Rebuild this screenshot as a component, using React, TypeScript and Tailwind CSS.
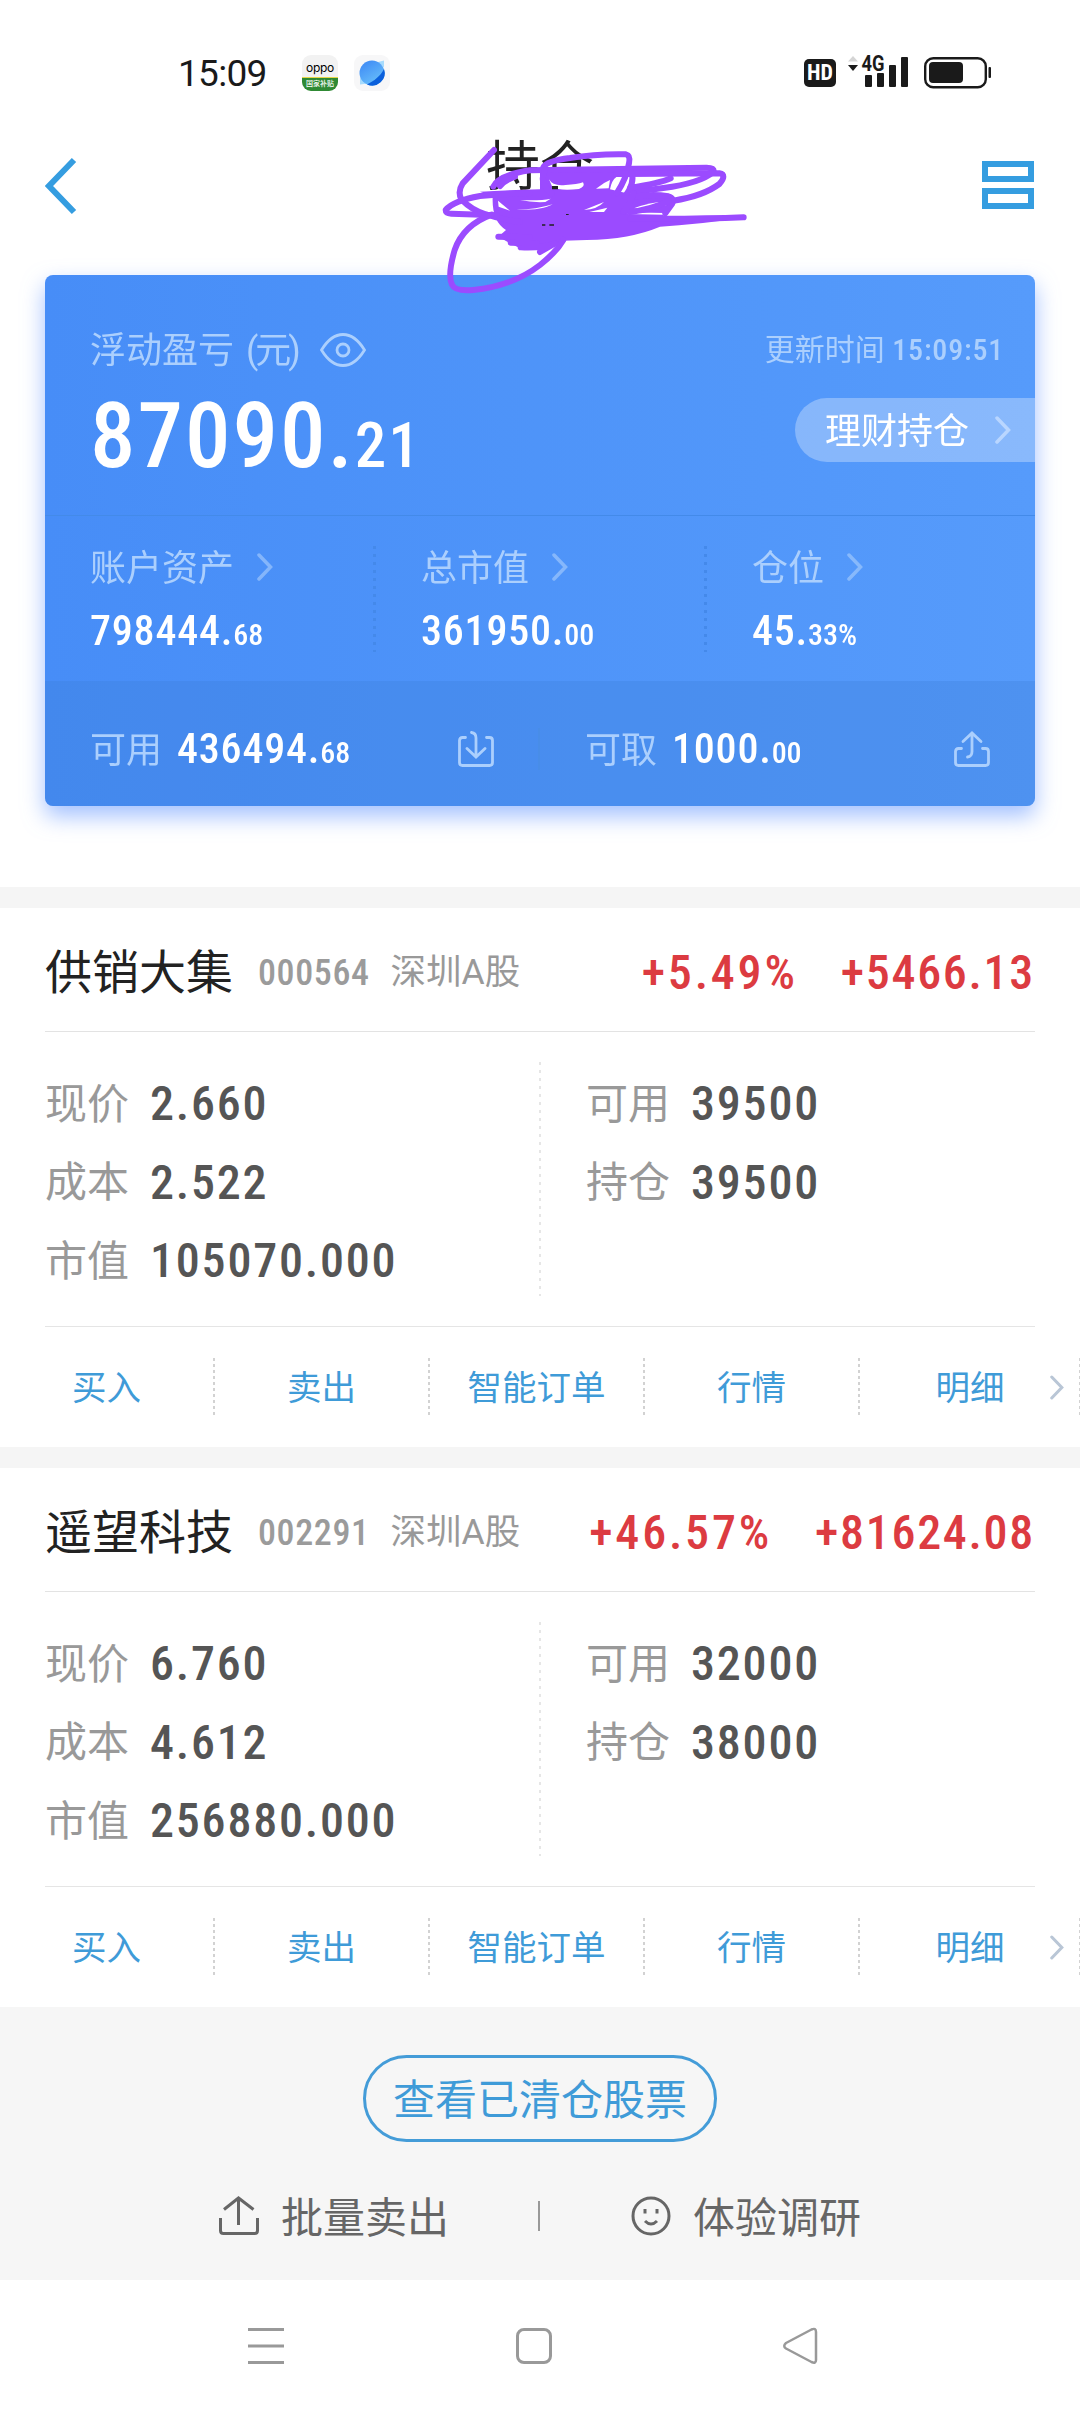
import React from "react";
import { clsx } from "clsx";

type Stock = {
  name: string;
  code: string;
  market: string;
  percent: string;
  profit: string;
  price: string;
  cost: string;
  marketValue: string;
  available: string;
  position: string;
};

type AmountProps = {
  value: string;
  className?: string;
};

const stocks: Stock[] = [
  {
    name: "供销大集",
    code: "000564",
    market: "深圳A股",
    percent: "+5.49%",
    profit: "+5466.13",
    price: "2.660",
    cost: "2.522",
    marketValue: "105070.000",
    available: "39500",
    position: "39500",
  },
  {
    name: "遥望科技",
    code: "002291",
    market: "深圳A股",
    percent: "+46.57%",
    profit: "+81624.08",
    price: "6.760",
    cost: "4.612",
    marketValue: "256880.000",
    available: "32000",
    position: "38000",
  },
];

const summary = [
  { label: "账户资产", value: "798444.68" },
  { label: "总市值", value: "361950.00" },
  { label: "仓位", value: "45.33%" },
];

const actions = ["买入", "卖出", "智能订单", "行情", "明细"];

const Chevron: React.FC<{ className?: string }> = ({ className }) => (
  <svg viewBox="0 0 16 28" fill="none" stroke="currentColor" strokeWidth="3.5" className={className}>
    <path d="M2 2l11.5 12L2 26" strokeLinecap="round" />
  </svg>
);

const StatusBar = () => (
  <div className="flex h-[130px] items-start pt-[55px] text-[#1a1a1a]">
    <span className="ml-[178px] w-[91px] text-[37px] leading-[38px] tracking-[-0.7px]">15:09</span>
    <div className="ml-[33px] flex h-9 w-9 flex-col overflow-hidden rounded-[9px] bg-[#f2f2f2]">
      <span className="h-[22px] pt-1 text-center font-['Inter'] text-[12px] leading-[18px] tracking-[-0.3px] text-black">
        oppo
      </span>
      <span className="h-[14px] border-t border-[#e6d84a] bg-[#2f8a34] text-center text-[7px] leading-[13px] font-medium text-white">
        国家补贴
      </span>
    </div>
    <svg viewBox="0 0 36 36" className="ml-4 h-9 w-9">
      <defs>
        <linearGradient id="globe" x1="0.2" y1="0" x2="0.8" y2="1">
          <stop offset="0" stopColor="#3f8bf5" />
          <stop offset="1" stopColor="#6cc4fb" />
        </linearGradient>
      </defs>
      <rect width="36" height="36" rx="9" fill="#f7f7f8" />
      <path d="M24 7l6-1.5v7zM6 23v6.500l8-1z" fill="#a6dbfd" />
      <circle cx="18" cy="18" r="12.500" fill="url(#globe)" />
      <path d="M30 14a12.500 12.500 0 0 1-17 15.500C20 26 26.500 21 30 14z" fill="#0b60dc" />
    </svg>
    <div className="mt-1 ml-[414px] flex h-7 w-8 items-center justify-center rounded-[5px] bg-[#1a1a1a] text-[22px] leading-7 font-bold text-white [font-stretch:80%]">
      HD
    </div>
    <svg viewBox="0 0 62 36" className="ml-3 h-9 w-[62px] overflow-visible" fill="#1a1a1a">
      <path d="M0 6.500L5 1l5 5.500z" fill="#d5d5d5" />
      <path d="M0 10l5 6 5-6z" />
      <text x="13.500" y="16" fontSize="22" fontWeight="700" textLength="23" lengthAdjust="spacingAndGlyphs">
        4G
      </text>
      <rect x="17" y="20" width="7" height="12" rx="1" />
      <rect x="29" y="18" width="7" height="14" rx="1" />
      <rect x="41" y="10" width="7" height="22" rx="1" />
      <rect x="53" y="2" width="7" height="30" rx="1" />
    </svg>
    <svg viewBox="0 0 68 36" className="ml-[14px] h-9 w-[68px]" fill="#1a1a1a">
      <rect x="1.200" y="3.200" width="60.600" height="29" rx="8" fill="none" stroke="#1a1a1a" strokeWidth="2.400" />
      <rect x="5" y="7" width="34" height="21" rx="4" />
      <rect x="64.500" y="12" width="2.500" height="11" rx="1" />
    </svg>
  </div>
);

// Pen marks that cover the account line below the title
const Scribble = () => (
  <svg viewBox="0 0 990 510" className="pointer-events-none absolute top-0 left-[430px] z-10 h-[170px] w-[330px]">
    <path
      fill="#9b4bff"
      d="M150 185Q230 180 330 178L330 118Q480 104 600 118L720 138L560 140Q545 150 540 178L600 192L720 198L720 232L700 258L945 262Q800 285 690 290Q600 328 470 330L400 332L350 362L270 355L240 340L205 320L228 300Q185 275 188 200Z"
    />
    <g fill="white">
      <path d="M357 148q12 22 50 17 35-2 52-8 8 12-12 20-60 6-80-6z" />
      <path d="M342 150q4 20 20 30l-18-2z" />
      <path d="M540 150q-20 8-42 26l38-1z" />
      <path d="M204 212l36 30-34-12z" />
      <path d="M270 210q60 3 92-4l-16 10q-40 2-76-6z" />
      <path d="M260 240q60-2 108-17-30 18-108 17z" />
      <path d="M478 246l54-13-10 13z" />
      <path d="M462 240l60-24q-20 22-60 24z" />
      <path d="M612 235q50-20 92-20l6 10q-50 12-98 10z" />
      <path d="M590 252q50-6 112-3l-2 5z" />
    </g>
    <g fill="#222">
      <path d="M366 168h18v10h-18zM336 283h10v4h-10zM358 283h14v4h-14zM408 252h8v3h-8z" />
    </g>
    <g fill="none" stroke="#9b4bff" strokeWidth="18" strokeLinecap="round" strokeLinejoin="round">
      <path d="M192 60L98 160Q82 185 94 208Q125 240 165 252Q210 268 270 276" />
      <path d="M300 190Q240 190 150 198Q70 212 47 240Q47 250 64 251L200 256" />
      <path d="M185 254Q100 285 74 360Q52 435 66 464Q75 485 130 480Q250 467 330 405Q380 365 400 330" />
      <path d="M340 112Q350 92 420 84Q500 71 588 73Q602 76 597 100Q590 145 560 190" />
      <path d="M190 170Q205 135 300 121L830 113Q855 113 850 126Q810 160 700 174L610 186" />
      <path d="M560 132L868 130Q892 134 868 162Q820 198 730 212" />
      <path d="M605 128Q615 160 585 200M600 174Q690 160 722 145" />
      <path d="M210 168Q225 150 255 140M345 120Q325 160 365 190" />
      <path d="M600 203Q660 190 715 199Q735 205 726 222L706 250" />
      <path d="M600 246Q660 240 715 214M610 188Q606 215 580 245" />
      <path d="M600 266Q800 268 941 262" />
      <path d="M205 320L300 322M242 338L320 340M272 352Q340 355 375 340L330 366" />
    </g>
  </svg>
);

const Header = () => (
  <header className="relative flex h-[145px] justify-between pr-[46px] pl-[45px]">
    <svg viewBox="0 0 32 58" className="mt-[27px] h-[58px] w-8" fill="none" stroke="#359de0" strokeWidth="6">
      <path d="M29 3L4 29l25 26" />
    </svg>
    <h1 className="mt-[5px] ml-[21px] text-[54px] leading-[66px] text-[#222]">持仓</h1>
    <svg viewBox="0 0 52 48" className="mt-[31px] h-12 w-[52px]" fill="none" stroke="#359de0" strokeWidth="6">
      <rect x="3" y="3" width="46" height="15" />
      <rect x="3" y="30" width="46" height="15" />
    </svg>
    <Scribble />
  </header>
);

const Amount: React.FC<AmountProps> = ({ value, className }) => {
  const [integer, decimal] = value.split(".");

  return (
    <span
      className={clsx("text-[42px] leading-[42px] font-medium tracking-[0.8px] text-white [font-stretch:87%]", className)}
    >
      {integer}.<span className="text-[30px] tracking-[-0.100px]">{decimal}</span>
    </span>
  );
};

const AccountCard = () => (
  <section className="mx-[45px] h-[531px] overflow-hidden rounded-lg bg-linear-to-r from-[#478df7] to-[#569bfb] text-[#abcffd]">
    <div className="flex h-[240px] justify-between pl-[45px]">
      <div className="pt-[55px]">
        <div className="flex h-[42px] items-center text-[36px]">
          <span>浮动盈亏</span>
          <span className="ml-3 tracking-[-3px]">(元)</span>
          <svg viewBox="0 0 46 34" className="mb-[3px] ml-[22px] h-[34px] w-[46px]" fill="none" stroke="currentColor" strokeWidth="2.800">
            <path d="M1.500 17C7 8 14 1.500 23 1.500S39 8 44.500 17C39 26 32 32.500 23 32.500S7 26 1.500 17z" />
            <circle cx="23" cy="17" r="6" />
          </svg>
        </div>
        <div className="mt-[19px] text-[91px] leading-[90px] font-medium tracking-[2px] text-white [font-stretch:87%]">
          87090.<span className="text-[63px] tracking-[2px]">21</span>
        </div>
      </div>
      <div className="flex flex-col items-end pt-[54px]">
        <span className="mr-[31px] text-[30px] leading-[42px]">
          更新时间 <span className="font-medium tracking-[0.800px] [font-stretch:87%]">15:09:51</span>
        </span>
        <button type="button" className="mt-[27px] flex h-16 w-60 items-center rounded-l-full bg-white/30 pl-[30px] text-[36px] text-white">
          <span className="pt-1">理财持仓</span>
          <Chevron className="ml-[26px] h-7 w-4 text-[#b9d6ff]" />
        </button>
      </div>
    </div>

    <div className="flex h-[166px] border-t border-[#438ae9] pt-[30px]">
      {summary.map(({ label, value }, i) => (
        <React.Fragment key={label}>
          {i > 0 && (
            <div className="h-[106px] w-[3px] shrink-0 bg-[repeating-linear-gradient(#4489ea_0_3px,transparent_3px_8px)]" />
          )}
          <div className="w-[328px] shrink-0 pl-[45px]">
            <div className="flex h-[43px] items-center text-[36px]">
              <span className="pt-[2px]">{label}</span>
              <Chevron className="mb-[2px] ml-[23px] h-7 w-4 opacity-60" />
            </div>
            <div className="mt-[23px] flex h-[42px] items-center">
              <Amount value={value} />
            </div>
          </div>
        </React.Fragment>
      ))}
    </div>

    <div className="flex h-[125px] items-center bg-[#3c7fd8]/30 pt-[10px]">
      <div className="flex h-[42px] w-[495px] items-center border-r-2 border-[#488de8] pl-[45px] text-[36px]">
        <span className="pt-[5px]">可用</span>
        <Amount value="436494.68" className="ml-[15px] pt-[5px]" />
        <svg viewBox="0 0 36 36" className="mr-[44px] ml-auto h-9 w-9" fill="none" stroke="currentColor" strokeWidth="2.800" strokeLinecap="round">
          <path d="M7.500 6.500H4.500Q1.500 6.500 1.500 9.500V31.500Q1.500 34.500 4.500 34.500H31.500Q34.500 34.500 34.500 31.500V9.500Q34.500 6.500 31.500 6.500H28.500" />
          <path d="M13.500 1.500Q18 2 18 7V26M9 17.500l9 8.500 9-8.500" />
        </svg>
      </div>
      <div className="flex h-[42px] flex-1 items-center pr-[45px] pl-[45px] text-[36px]">
        <span className="pt-[5px]">可取</span>
        <Amount value="1000.00" className="ml-[15px] pt-[5px]" />
        <svg viewBox="0 0 36 36" className="ml-auto h-9 w-9" fill="none" stroke="currentColor" strokeWidth="2.800" strokeLinecap="round">
          <path d="M7.500 17.500H4.500Q1.500 17.500 1.500 20.500V31.500Q1.500 34.500 4.500 34.500H31.500Q34.500 34.500 34.500 31.500V20.500Q34.500 17.500 31.500 17.500H28.500" />
          <path d="M13.500 26Q18 25.500 18 20.500V2.500M9 10.500l9-8.500 9 8.500" />
        </svg>
      </div>
    </div>
  </section>
);

const Field: React.FC<{ label: string; value: string }> = ({ label, value }) => (
  <div className="flex h-[78.500px] items-center">
    <span className="w-[105px] text-[42px] text-[#999]">{label}</span>
    <span className="text-[48px] font-medium tracking-[1.800px] text-[#555] [font-stretch:87%]">{value}</span>
  </div>
);

const StockSection: React.FC<{ stock: Stock }> = ({ stock }) => (
  <section className="h-[560px] border-t-[21px] border-[#f5f5f5] bg-white">
    <div className="mx-[45px] flex h-[124px] items-center border-b border-[#e3e3e3] pt-[7px]">
      <h2 className="text-[47px] text-[#222]">{stock.name}</h2>
      <span className="ml-[25px] text-[36px] font-medium tracking-[0.600px] text-[#9b9b9b] [font-stretch:87%]">
        {stock.code}
      </span>
      <span className="ml-[21px] text-[35.500px] text-[#999]">{stock.market}</span>
      <div className="ml-auto flex gap-[43px] text-[48px] font-medium text-[#dc3b41] [font-stretch:87%]">
        <span className="tracking-[2.800px]">{stock.percent}</span>
        <span className="tracking-[1.700px]">{stock.profit}</span>
      </div>
    </div>

    <div className="mx-[45px] flex h-[295px] border-b border-[#e5e5e5] pt-[30px] pb-[30px]">
      <div className="w-[494px] pt-[3px]">
        <Field label="现价" value={stock.price} />
        <Field label="成本" value={stock.cost} />
        <Field label="市值" value={stock.marketValue} />
      </div>
      <div className="w-[2px] bg-[repeating-linear-gradient(#e6e6e6_0_3px,transparent_3px_8px)]" />
      <div className="pt-[3px] pl-[45px]">
        <Field label="可用" value={stock.available} />
        <Field label="持仓" value={stock.position} />
      </div>
    </div>

    <div className="flex h-[120px] items-center text-[34.500px] text-[#3f9bd8]">
      {actions.map((action, i) => (
        <div
          key={action}
          className={clsx("flex h-[58px] shrink-0 items-center justify-center", i === 4 ? "w-[221px]" : "w-[215px]")}
        >
          <span className="flex-1 pt-1 text-center">{action}</span>
          {i === 4 && <Chevron className="mr-[15px] -ml-[30px] h-[25px] w-[14px] text-[#b9c6d6]" />}
          <span className="h-full w-[2px] bg-[repeating-linear-gradient(#d2d2d2_0_3px,transparent_3px_6px)]" />
        </div>
      ))}
    </div>
  </section>
);

const Footer = () => (
  <footer className="flex h-[273px] flex-col items-center bg-[#f6f6f6] pt-12">
    <button type="button" className="h-[87px] w-[354px] rounded-full border-[3px] border-[#449cd8] pt-[5px] text-[42px] leading-[76px] text-[#3f9bd8]">
      查看已清仓股票
    </button>
    <div className="mt-[50px] flex h-[52px] w-full items-center text-[42px] text-[#666]">
      <svg viewBox="0 0 40 40" className="mb-1 ml-[219px] h-10 w-10" fill="none" stroke="currentColor" strokeWidth="3">
        <path d="M1.500 22V34.500Q1.500 37.500 4.500 37.500H35.500Q38.500 37.500 38.500 34.500V22M19.500 29V2M5 13.500L19.500 2 34.500 13.500" />
      </svg>
      <span className="ml-[22px]">批量卖出</span>
      <span className="mb-[5px] ml-[89px] h-[30px] w-[2px] bg-[#999]" />
      <svg viewBox="0 0 40 40" className="mb-1 ml-[91px] h-10 w-10" fill="none" stroke="currentColor" strokeWidth="3">
        <circle cx="20" cy="20" r="18" />
        <path d="M14 13v4.500M26 13v4.500M14 25Q20 31 26 25" />
      </svg>
      <span className="ml-[22px]">体验调研</span>
    </div>
  </footer>
);

const NavigationBar = () => (
  <nav className="flex h-[132px] items-center pl-[248px] text-[#999]">
    <svg viewBox="0 0 36 38" className="h-[38px] w-9" stroke="currentColor" strokeWidth="3">
      <path d="M0 2.500h36M0 19h36M0 35.500h36" />
    </svg>
    <span className="ml-[232px] h-9 w-9 rounded-[8px] border-[3px] border-[#999]" />
    <svg viewBox="0 0 36 38" className="ml-[230px] h-[38px] w-9" fill="none" stroke="currentColor" strokeWidth="2.500" strokeLinejoin="round">
      <path d="M29.500 2.500Q34 0.500 34 5V33Q34 37 29.500 35L4 21.500Q0.500 19 4 16z" />
    </svg>
  </nav>
);

const App = () => (
  <div className="h-[2412px] w-[1080px] overflow-hidden bg-white font-['Roboto','Noto_Sans_CJK_SC',sans-serif]">
    <StatusBar />
    <Header />
    <div className="h-[612px]">
      <div className="drop-shadow-[0_10px_11px_rgba(70,130,255,0.5)]">
        <AccountCard />
      </div>
    </div>
    {stocks.map((stock) => (
      <StockSection key={stock.code} stock={stock} />
    ))}
    <Footer />
    <NavigationBar />
  </div>
);

export default App;
